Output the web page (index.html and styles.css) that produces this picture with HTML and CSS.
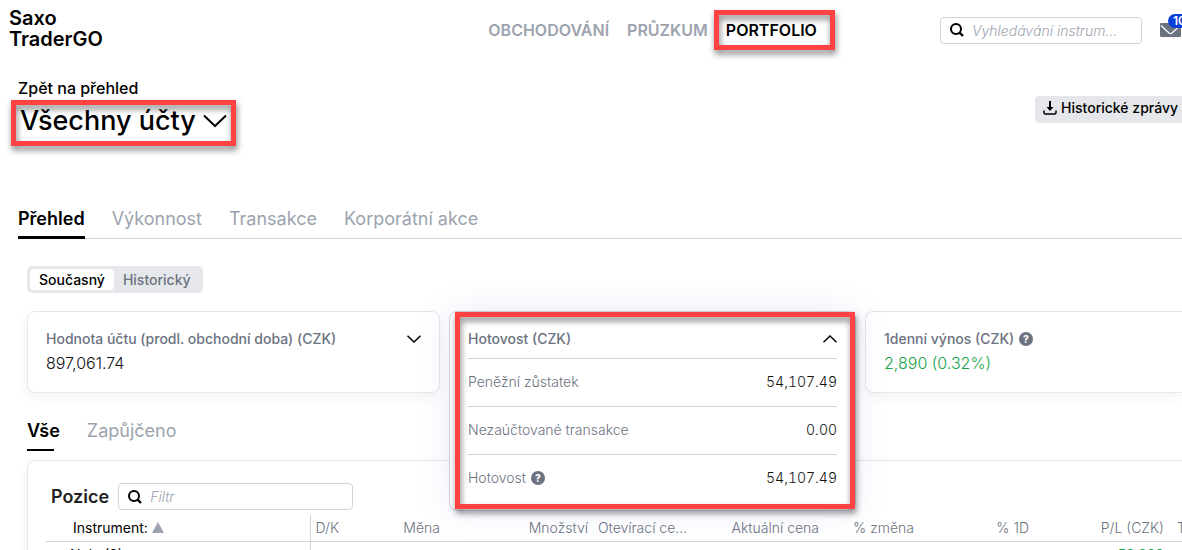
FILE: index.html
```html
<!DOCTYPE html>
<html lang="cs">
<head>
    <meta charset="UTF-8">
    <meta name="viewport" content="width=device-width, initial-scale=1.0">
    <title>Saxo TraderGO</title>
    <link rel="stylesheet" href="styles.css">
</head>
<body>
    <header class="header">
        <a class="logo" href="#">Saxo<br>TraderGO</a>
        <nav class="main-nav">
            <a href="#">OBCHODOVÁNÍ</a>
            <a href="#">PRŮZKUM</a>
            <a class="active highlight" href="#">PORTFOLIO</a>
        </nav>
        <div class="header-tools">
            <label class="search">
                <svg width="16" height="16" viewBox="0 0 16 16" fill="none" stroke="currentColor" stroke-width="2">
                    <circle cx="7" cy="7" r="5"></circle>
                    <path d="M10.6 10.6L14 14" stroke-width="2.4"></path>
                </svg>
                <input type="search" placeholder="Vyhledávání instrum..." aria-label="Vyhledávání instrumentů">
            </label>
            <button class="mail" aria-label="Zprávy">
                <svg width="21" height="14" viewBox="0 0 21 14">
                    <rect width="21" height="14" rx="1" fill="#6b7280"></rect>
                    <path d="M1 2.5L9 10Q10.5 11.2 12 10L20 2.5" fill="none" stroke="#fff" stroke-width="1.2"></path>
                </svg>
                <span class="badge">10</span>
            </button>
        </div>
    </header>

    <section class="account">
        <div>
            <a class="back" href="#">Zpět na přehled</a>
            <button class="account-select highlight">
                Všechny účty
                <svg width="24" height="14" viewBox="0 0 24 14" fill="none" stroke="currentColor" stroke-width="2">
                    <path d="M1 1.5L12 12L23 1.5"></path>
                </svg>
            </button>
        </div>
        <button class="reports">
            <svg width="14" height="14" viewBox="0 0 14 14" fill="none" stroke="currentColor" stroke-width="1.5">
                <path d="M7 0V8" stroke-width="2"></path>
                <path d="M3.5 6H10.5L7 10Z" fill="currentColor" stroke="none"></path>
                <path d="M1 9.5V11.5Q1 13 2.5 13H11.5Q13 13 13 11.5V9.5"></path>
            </svg>
            Historické zprávy
        </button>
    </section>

    <nav class="tabs">
        <a class="active" href="#">Přehled</a>
        <a href="#">Výkonnost</a>
        <a href="#">Transakce</a>
        <a href="#">Korporátní akce</a>
    </nav>

    <main class="content">
        <div class="toggle">
            <button class="active">Současný</button>
            <button>Historický</button>
        </div>

        <div class="cards">
            <section class="card">
                <div class="card-head">
                    <h2>Hodnota účtu (prodl. obchodní doba) (CZK)</h2>
                    <button class="chevron" aria-label="Rozbalit">
                        <svg width="14" height="8" viewBox="0 0 14 8" fill="none" stroke="currentColor" stroke-width="1.5">
                            <path d="M0.5 0.7L7 7L13.5 0.7"></path>
                        </svg>
                    </button>
                </div>
                <p class="value">897,061.74</p>
            </section>
            <div class="card-slot">
                <section class="card open highlight">
                    <div class="card-head">
                        <h2>Hotovost (CZK)</h2>
                        <button class="chevron" aria-label="Sbalit">
                            <svg width="14" height="8" viewBox="0 0 14 8" fill="none" stroke="currentColor" stroke-width="1.5">
                                <path d="M0.5 7.3L7 1L13.5 7.3"></path>
                            </svg>
                        </button>
                    </div>
                    <dl class="breakdown">
                        <div><dt>Peněžní zůstatek</dt><dd>54,107.49</dd></div>
                        <div><dt>Nezaúčtované transakce</dt><dd>0.00</dd></div>
                        <div><dt>Hotovost <span class="help">?</span></dt><dd>54,107.49</dd></div>
                    </dl>
                </section>
            </div>
            <section class="card">
                <div class="card-head">
                    <h2>1denní výnos (CZK) <span class="help">?</span></h2>
                </div>
                <p class="value gain">2,890 (0.32%)</p>
            </section>
        </div>

        <nav class="subtabs">
            <a class="active" href="#">Vše</a>
            <a href="#">Zapůjčeno</a>
        </nav>

        <section class="positions">
            <div class="positions-head">
                <h2>Pozice</h2>
                <label class="search">
                    <svg width="16" height="16" viewBox="0 0 16 16" fill="none" stroke="currentColor" stroke-width="2">
                        <circle cx="7" cy="7" r="5"></circle>
                        <path d="M10.6 10.6L14 14" stroke-width="2.4"></path>
                    </svg>
                    <input type="search" placeholder="Filtr" aria-label="Filtr">
                </label>
            </div>
            <table>
                <colgroup>
                    <col class="col-instrument">
                    <col class="col-side">
                    <col class="col-currency">
                    <col class="col-amount">
                    <col class="col-open">
                    <col class="col-price">
                    <col class="col-change">
                    <col class="col-day">
                    <col class="col-pl">
                    <col class="col-last">
                </colgroup>
                <thead>
                    <tr>
                        <th class="instrument">Instrument: <span class="sort"></span></th>
                        <th class="left">D/K</th>
                        <th>Měna</th>
                        <th>Množství</th>
                        <th class="left">Otevírací ce...</th>
                        <th>Aktuální cena</th>
                        <th>% změna</th>
                        <th>% 1D</th>
                        <th>P/L (CZK)</th>
                        <th>T</th>
                    </tr>
                </thead>
                <tbody>
                    <tr>
                        <td class="instrument">Nula (8)</td>
                        <td colspan="7"></td>
                        <td class="gain">58,888</td>
                        <td></td>
                    </tr>
                </tbody>
            </table>
        </section>
    </main>
</body>
</html>
```
FILE: styles.css
```css
:root {
    --text: #000;
    --gray: #6b7280;
    --muted: #9ca3af;
    --line: #d1d5db;
    --soft: #e5e7eb;
    --red: #ff4343;
    --green: #16a34a;
}
* {
    box-sizing: border-box;
}
body {
    font-family: Inter, sans-serif;
    font-size: 14px;
    line-height: 20px;
    color: var(--text);
    background-color: #fff;
    margin: 0;
    height: 100vh;
    overflow: hidden;
}
a {
    color: inherit;
    text-decoration: none;
}
button {
    font: inherit;
    color: inherit;
    background: none;
    border: none;
    padding: 0;
    cursor: pointer;
}
h2, p, dl, dd {
    margin: 0;
}
.highlight {
    position: relative;
}
.highlight::after {
    content: "";
    position: absolute;
    inset: 0;
    border: 5px solid var(--red);
    filter: drop-shadow(1px 4px 3px rgba(0, 0, 0, 0.5));
    pointer-events: none;
}
.header {
    display: grid;
    grid-template-columns: 29fr auto 21fr;
    align-items: center;
    height: 60px;
    padding-left: 9px;
}
.logo {
    font-size: 20px;
    font-weight: 600;
    line-height: 21px;
    margin-bottom: 3px;
}
.main-nav {
    display: flex;
    align-items: center;
    gap: 18px;
    font-size: 16px;
    font-weight: 600;
    color: var(--muted);
}
.main-nav .active {
    color: var(--text);
    padding: 10px 18px 10px 12px;
    margin-left: -12px;
}
.header-tools {
    display: flex;
    justify-content: flex-end;
    align-items: center;
    gap: 18px;
}
.search {
    display: flex;
    align-items: center;
    width: 202px;
    height: 27px;
    padding-left: 8px;
    gap: 7px;
    border: 1px solid var(--line);
    border-radius: 4px;
}
.search input {
    font: italic 300 14px Inter, sans-serif;
    flex: 1;
    min-width: 0;
    padding: 0;
    border: none;
    outline: none;
    background: none;
}
.search input::placeholder {
    color: var(--muted);
}
.mail {
    position: relative;
    display: flex;
    margin-right: 1px;
}
.badge {
    position: absolute;
    top: -9px;
    left: 8px;
    padding: 0 5px;
    font-size: 12px;
    font-weight: 600;
    line-height: 14px;
    color: #fff;
    background-color: #0b3fd9;
    border-radius: 7px;
}
.account {
    display: flex;
    justify-content: space-between;
    align-items: flex-start;
    padding: 18px 0 0 11px;
}
.back {
    display: block;
    padding-left: 7px;
    margin-bottom: 2px;
    font-size: 16px;
    font-weight: 500;
}
.account-select {
    display: flex;
    align-items: center;
    gap: 7px;
    height: 46px;
    padding: 0 9px 4px;
    font-size: 27px;
    font-weight: 500;
}
.reports {
    display: flex;
    align-items: center;
    gap: 4px;
    height: 27px;
    margin-top: 18px;
    padding: 0 4px 3px 8px;
    font-weight: 500;
    background-color: var(--soft);
    border-radius: 4px 0 0 4px;
}
.tabs {
    display: flex;
    gap: 27px;
    margin: 53px 0 0 18px;
    font-size: 18px;
    color: var(--muted);
    border-bottom: 1px solid var(--line);
}
.tabs a {
    padding: 10px 0 7px;
    border-bottom: 3px solid transparent;
    margin-bottom: -1px;
}
.tabs .active {
    color: var(--text);
    font-weight: 600;
    border-color: var(--text);
}
.content {
    padding: 27px 0 0 27px;
}
.toggle {
    display: inline-flex;
    height: 27px;
    padding: 3px;
    font-weight: 500;
    color: var(--gray);
    background-color: var(--soft);
    border-radius: 5px;
}
.toggle button {
    padding: 0 9px;
    border-radius: 4px;
}
.toggle .active {
    color: var(--text);
    background-color: #fff;
}
.cards {
    display: grid;
    grid-template-columns: 413fr 407fr 317fr;
    gap: 9px;
    margin-top: 18px;
}
.card {
    height: 82px;
    padding: 17px 18px;
    background-color: #fff;
    border: 1px solid var(--soft);
    border-radius: 8px;
    box-shadow: 0 4px 12px rgba(0, 0, 0, 0.05);
}
.cards > .card:last-child {
    border-right: none;
    border-radius: 8px 0 0 8px;
}
.card-slot {
    position: relative;
}
/* the opened card lies over the content below it */
.card.open {
    position: absolute;
    z-index: 1;
    top: 0;
    left: 0;
    right: 0;
    height: auto;
    padding-bottom: 8px;
    border-color: var(--line);
    box-shadow: 0 0 36px rgba(60, 80, 200, 0.1);
}
.card.open::after {
    left: 5px;
    bottom: 1px;
}
.card-head {
    display: flex;
    justify-content: space-between;
    align-items: center;
}
.card h2 {
    font-size: 14px;
    font-weight: 500;
    color: var(--gray);
}
.chevron {
    display: flex;
}
.value {
    margin-top: 4px;
    font-size: 16px;
    font-weight: 300;
    color: #111;
}
.gain, .value.gain {
    color: var(--green);
}
.breakdown {
    margin-top: 9px;
    font-weight: 300;
}
.breakdown div {
    display: flex;
    justify-content: space-between;
    padding: 13px 0 14px;
    border-top: 1px solid var(--line);
}
.breakdown dt {
    color: var(--gray);
}
.breakdown dd {
    font-variant-numeric: tabular-nums;
    color: #111;
}
.help {
    display: inline-block;
    width: 14px;
    height: 14px;
    margin-left: 1px;
    font-size: 10px;
    font-weight: 800;
    line-height: 14px;
    text-align: center;
    vertical-align: 1px;
    color: #fff;
    background-color: var(--gray);
    border-radius: 50%;
}
.subtabs {
    display: flex;
    gap: 27px;
    margin-top: 28px;
    font-size: 18px;
    color: var(--muted);
}
.subtabs a {
    padding-bottom: 10px;
}
.subtabs .active {
    color: var(--text);
    font-weight: 600;
    background: linear-gradient(var(--text), var(--text)) left bottom / 27px 2px no-repeat;
}
.positions {
    margin-top: 9px;
    padding: 22px 0 0 18px;
    border: 1px solid var(--soft);
    border-right: none;
    border-radius: 8px 0 0 0;
    box-shadow: 0 4px 12px rgba(0, 0, 0, 0.05);
}
.positions-head {
    display: flex;
    align-items: center;
    gap: 9px;
    padding-left: 5px;
}
.positions-head h2 {
    font-size: 18px;
    font-weight: 600;
    color: #222;
}
.positions-head .search {
    width: 235px;
}
table {
    width: 1145px;
    margin-top: 5px;
    table-layout: fixed;
    border-collapse: collapse;
}
.col-instrument { width: 264px; }
.col-side { width: 35px; }
.col-currency { width: 100px; }
.col-amount { width: 148px; }
.col-open { width: 96px; }
.col-price { width: 135px; }
.col-change { width: 95px; }
.col-day { width: 115px; }
.col-pl { width: 135px; }
.col-last { width: 22px; }
th {
    padding: 3px 5px;
    font-weight: 300;
    text-align: right;
    color: var(--gray);
    white-space: nowrap;
    border-bottom: 1px solid var(--line);
}
th.left {
    text-align: left;
}
td {
    padding: 3px 5px;
    text-align: right;
}
.instrument {
    padding-left: 27px;
    font-weight: 400;
    text-align: left;
    color: var(--text);
    border-right: 1px solid var(--line);
}
td.instrument {
    padding-left: 24px;
}
.sort {
    display: inline-block;
    border: 6px solid transparent;
    border-top: none;
    border-bottom: 11px solid var(--muted);
}
```
